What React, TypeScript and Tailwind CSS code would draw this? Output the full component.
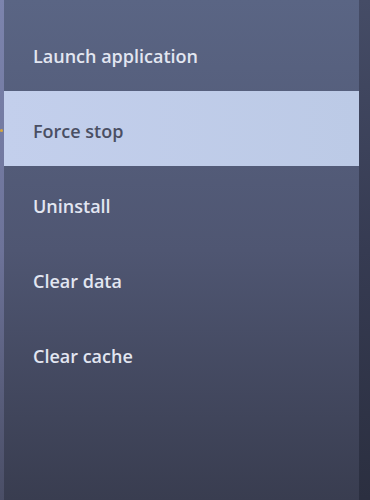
import React from "react";

const items = ["Launch application", "Force stop", "Uninstall", "Clear data", "Clear cache"];

export default function App() {
  return (
    <div className="flex h-[500px] w-[370px] overflow-hidden bg-[#3c4155]" style={{ fontFamily: '"Open Sans", "Noto Sans", sans-serif' }}>
      <div className="relative w-[4px] bg-gradient-to-b from-[#7c84ad] via-[#6d7399] to-[#4a4e66]">
        <div className="absolute left-0 top-[129px] h-[3px] w-[3px] rounded-full bg-[#d9a93a]" />
      </div>
      <div className="flex flex-1 flex-col bg-gradient-to-b from-[#5a6584] via-[#4f5672] to-[#393d50] pt-[16px]">
        {items.map((t, i) => (
          <div
            key={t}
            className={
              i === 1
                ? "flex h-[75px] items-center bg-gradient-to-r from-[#c3cfec] to-[#bccae6] pl-[29px] pt-[6px] text-[18px] font-semibold text-[#4a4f63]"
                : "flex h-[75px] items-center pl-[29px] pt-[6px] text-[18px] font-semibold text-[#e2e6f1]"
            }
          >
            {t}
          </div>
        ))}
      </div>
      <div className="w-[11px] bg-gradient-to-b from-[#454c66] via-[#363b52] to-[#2b2f40]" />
    </div>
  );
}
